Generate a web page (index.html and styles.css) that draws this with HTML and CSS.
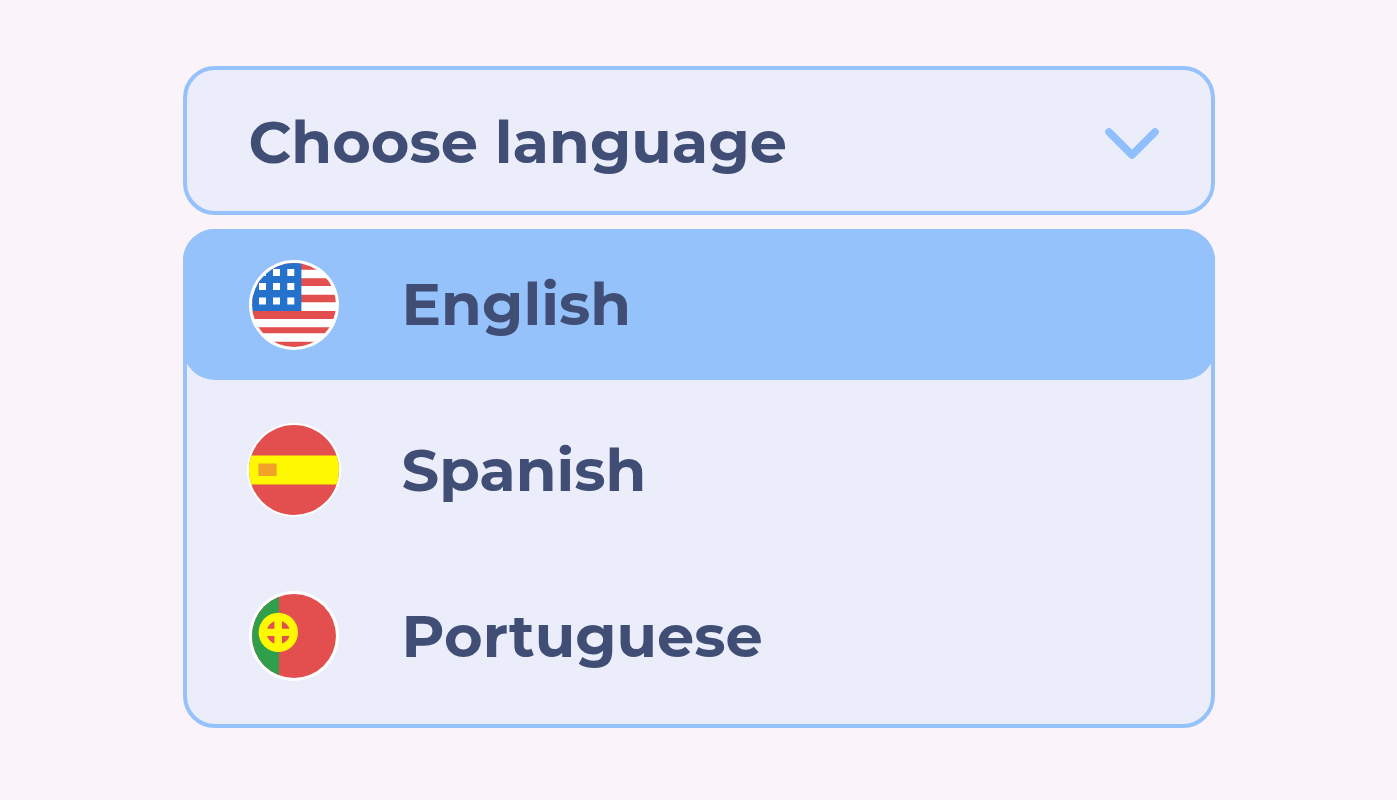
FILE: index.html
```html
<!DOCTYPE html>
<html lang="en">
<head>
    <meta charset="UTF-8">
    <meta name="viewport" content="width=device-width, initial-scale=1">
    <title>Choose language</title>
    <link rel="stylesheet" href="styles.css">
</head>
<body>
    <div class="dropdown">
        <button class="dropdown-toggle" type="button" aria-haspopup="listbox" aria-expanded="true" aria-controls="language-list">
            <span class="label">Choose language</span>
            <svg class="chevron" viewBox="0 0 54 32" aria-hidden="true">
                <path d="M4 5 27 28 50 5"/>
            </svg>
        </button>

        <div class="dropdown-menu" id="language-list" role="listbox" aria-label="Language">
            <button class="option active" type="button" role="option" aria-selected="true">
                <svg class="flag" viewBox="0 0 96 96" aria-hidden="true">
                    <clipPath id="us-clip"><circle cx="48" cy="48" r="42"/></clipPath>
                    <circle cx="48" cy="48" r="45" fill="#fff"/>
                    <g clip-path="url(#us-clip)">
                        <path fill="#fff" d="M0 0h96v96H0z"/>
                        <path fill="#e34f4f" d="M0 0h96v12.7H0zM0 21.3h96V29H0zM0 37.7h96v7.6H0zM0 54h96v8H0zM0 70.3h96v6H0zM0 84.7h96V96H0z"/>
                        <path fill="#2472cc" d="M0 0h55.4v54H0z"/>
                        <path fill="#fff" d="M13 12h7v7h-7zM27 12h7v7h-7zM41.3 12h7v7h-7zM13 26h7v7h-7zM27 26h7v7h-7zM41.3 26h7v7h-7zM13 40.4h7v7h-7zM27 40.4h7v7h-7zM41.3 40.4h7v7h-7z"/>
                    </g>
                </svg>
                <span class="label">English</span>
            </button>

            <button class="option" type="button" role="option" aria-selected="false">
                <svg class="flag" viewBox="0 0 96 96" aria-hidden="true">
                    <clipPath id="es-clip"><circle cx="48" cy="47" r="45"/></clipPath>
                    <circle cx="48" cy="47" r="47" fill="#fff"/>
                    <g clip-path="url(#es-clip)">
                        <path fill="#e34f4f" d="M0 0h96v96H0z"/>
                        <path fill="#fff800" d="M0 32.4h96v29.2H0z"/>
                        <path fill="#f3a229" d="M12.4 40.4h18.2V53H12.4z"/>
                    </g>
                </svg>
                <span class="label">Spanish</span>
            </button>

            <button class="option" type="button" role="option" aria-selected="false">
                <svg class="flag" viewBox="0 0 96 96" aria-hidden="true">
                    <clipPath id="pt-clip"><circle cx="48" cy="47" r="42"/></clipPath>
                    <circle cx="48" cy="47" r="45" fill="#fff"/>
                    <g clip-path="url(#pt-clip)">
                        <path fill="#e34f4f" d="M0 0h96v96H0z"/>
                        <path fill="#2f9f4b" d="M0 0h33v96H0z"/>
                    </g>
                    <circle cx="32.3" cy="43.4" r="19.7" fill="#fff800"/>
                    <circle cx="32.3" cy="43.4" r="11.7" fill="#e34f4f"/>
                    <path fill="#fff800" d="M28.4 31h7.6v25h-7.6zM20 39.7h25V47H20z"/>
                </svg>
                <span class="label">Portuguese</span>
            </button>
        </div>
    </div>

    <script>
        const toggle = document.querySelector('.dropdown-toggle');
        const menu = document.getElementById('language-list');
        const options = document.querySelectorAll('.option');

        toggle.addEventListener('click', () => {
            menu.hidden = !menu.hidden;
            toggle.setAttribute('aria-expanded', !menu.hidden);
        });

        options.forEach(option => {
            option.addEventListener('click', () => {
                options.forEach(o => {
                    o.classList.toggle('active', o === option);
                    o.setAttribute('aria-selected', o === option);
                });
            });
        });
    </script>
</body>
</html>
```
FILE: styles.css
```css
* {
    box-sizing: border-box;
}

body {
    margin: 0;
    padding: 66px 24px;
    background: #faf3fa;
}

button {
    border: none;
    font-family: Montserrat, Inter, "Liberation Sans", sans-serif;
    font-size: 59px;
    font-weight: 700;
    line-height: 72px;
    color: #404e75;
    text-align: left;
    cursor: pointer;
}

.dropdown {
    display: flex;
    flex-direction: column;
    gap: 14px;
    max-width: 1032px;
    margin: 0 auto;
}

.dropdown-toggle {
    display: flex;
    align-items: center;
    justify-content: space-between;
    padding: 36px 52px 31px 62px;
    background: #ebedfa;
    border: 4px solid #96c2fc;
    border-radius: 32px;
}

.label {
    padding-bottom: 2px;
}

.chevron {
    width: 54px;
    height: 32px;
    fill: none;
    stroke: #8fbffc;
    stroke-width: 7.5;
    stroke-linecap: round;
    stroke-linejoin: round;
}

.dropdown-menu {
    display: flex;
    flex-direction: column;
    gap: 15px;
    padding-bottom: 12px;
    background: #ebedfa;
    border: 4px solid #96c2fc;
    border-radius: 32px;
}

.dropdown-menu[hidden] {
    display: none;
}

/* options reach over the menu border */
.option {
    display: flex;
    align-items: center;
    gap: 60px;
    min-height: 151px;
    margin: 0 -4px;
    padding: 24px 63px;
    background: transparent;
    border-radius: 32px;
}

.option:first-child {
    margin-top: -4px;
}

.option.active {
    background: #96c2fc;
}

.flag {
    flex: none;
    width: 96px;
    height: 96px;
}
```
